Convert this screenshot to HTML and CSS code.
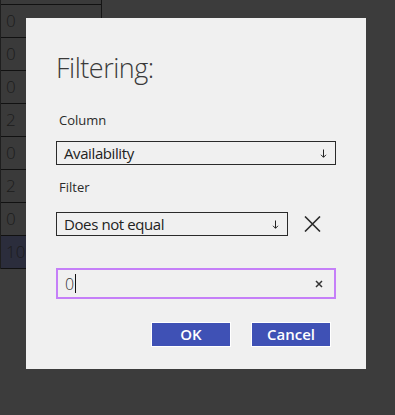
FILE: index.html
```html
<!DOCTYPE html>
<html>
<head>
<meta charset="utf-8">
<link rel="stylesheet" href="styles.css">
</head>
<body>
<div class="grid">
  <div class="row spacer"></div>
  <div class="row">0</div>
  <div class="row">0</div>
  <div class="row">0</div>
  <div class="row">2</div>
  <div class="row">0</div>
  <div class="row">2</div>
  <div class="row">0</div>
  <div class="row sel">10</div>
</div>

<div class="dialog">
  <h1 class="title">Filtering:</h1>
  <div class="label label-col">Column</div>
  <div class="select select-wide">
    <span>Availability</span>
    <svg class="arrow" width="7" height="9" viewBox="0 0 7 9"><path d="M3.5 0.5V8.2M1 5.8L3.5 8.3L6 5.8" fill="none" stroke="#222" stroke-width="1"/></svg>
  </div>
  <div class="label label-filter">Filter</div>
  <div class="filter-row">
    <div class="select select-narrow">
      <span>Does not equal</span>
      <svg class="arrow" width="7" height="9" viewBox="0 0 7 9"><path d="M3.5 0.5V8.2M1 5.8L3.5 8.3L6 5.8" fill="none" stroke="#222" stroke-width="1"/></svg>
    </div>
    <svg class="remove" width="17" height="16" viewBox="0 0 17 16"><path d="M1 0.5L16 15.5M16 0.5L1 15.5" fill="none" stroke="#2a2a2a" stroke-width="1.6"/></svg>
  </div>
  <div class="input">
    <span class="value">0</span><span class="caret"></span>
    <svg class="clear" width="8" height="8" viewBox="0 0 8 8"><path d="M1 1L7 7M7 1L1 7" fill="none" stroke="#333" stroke-width="1.5"/></svg>
  </div>
  <div class="buttons">
    <button class="btn">OK</button>
    <button class="btn">Cancel</button>
  </div>
</div>
</body>
</html>
```

FILE: styles.css
```css
html, body {
  margin: 0;
  padding: 0;
}
body {
  width: 395px;
  height: 415px;
  background: #3c3c3c;
  font-family: "Open Sans", "Noto Sans", sans-serif;
  position: relative;
  overflow: hidden;
}
.grid {
  width: 100px;
  border-right: 1px solid #151515;
  border-left: 1px solid #1e1e1e;
}
.row {
  height: 32px;
  border-bottom: 1px solid #111;
  background: #3a3a3a;
  color: #1c1c1c;
  font-size: 17px;
  line-height: 32px;
  padding-left: 5px;
  font-weight: 300;
}
.row.spacer {
  height: 4px;
}
.row.sel {
  background: #2b2d3c;
}
.dialog {
  position: absolute;
  left: 26px;
  top: 18px;
  width: 340px;
  height: 351px;
  box-sizing: border-box;
  background: #f0f0f0;
  padding: 30px 30px 0 30px;
  display: flex;
  flex-direction: column;
}
.title {
  margin: 0;
  font-size: 27px;
  letter-spacing: -0.5px;
  font-weight: 300;
  line-height: 40px;
  color: #3a3a3a;
}
.label {
  font-size: 13px;
  line-height: 18px;
  color: #2a2a2a;
  padding-left: 3px;
}
.label-col {
  margin-top: 23px;
}
.label-filter {
  margin-top: 13px;
}
.select {
  height: 24px;
  box-sizing: border-box;
  border: 1px solid #2a2a2a;
  display: flex;
  align-items: center;
  justify-content: space-between;
  padding: 0 8px 0 7px;
  font-size: 15px;
  letter-spacing: -0.4px;
  color: #222;
}
.select-wide {
  width: 280px;
  margin-top: 12px;
}
.filter-row {
  margin-top: 16px;
  display: flex;
  align-items: center;
  gap: 16px;
}
.select-narrow {
  width: 232px;
}
.remove {
  display: block;
}
.input {
  margin-top: 32px;
  width: 280px;
  height: 31px;
  box-sizing: border-box;
  border: 2px solid #c57ff8;
  display: flex;
  align-items: center;
  padding: 0 11px 0 7px;
  font-size: 16px;
  color: #333;
  font-weight: 300;
}
.caret {
  width: 1px;
  height: 19px;
  background: #111;
  margin-left: 1px;
}
.clear {
  margin-left: auto;
}
.buttons {
  margin-top: 23px;
  display: flex;
  justify-content: flex-end;
  gap: 20px;
  padding-right: 5px;
}
.btn {
  width: 80px;
  height: 25px;
  box-sizing: border-box;
  border: 1px solid #ffffff;
  background: #3f51b5;
  color: #fff;
  font-family: "Open Sans", "Noto Sans", sans-serif;
  font-size: 15px;
  font-weight: 600;
  padding: 0;
  line-height: 23px;
}
```
